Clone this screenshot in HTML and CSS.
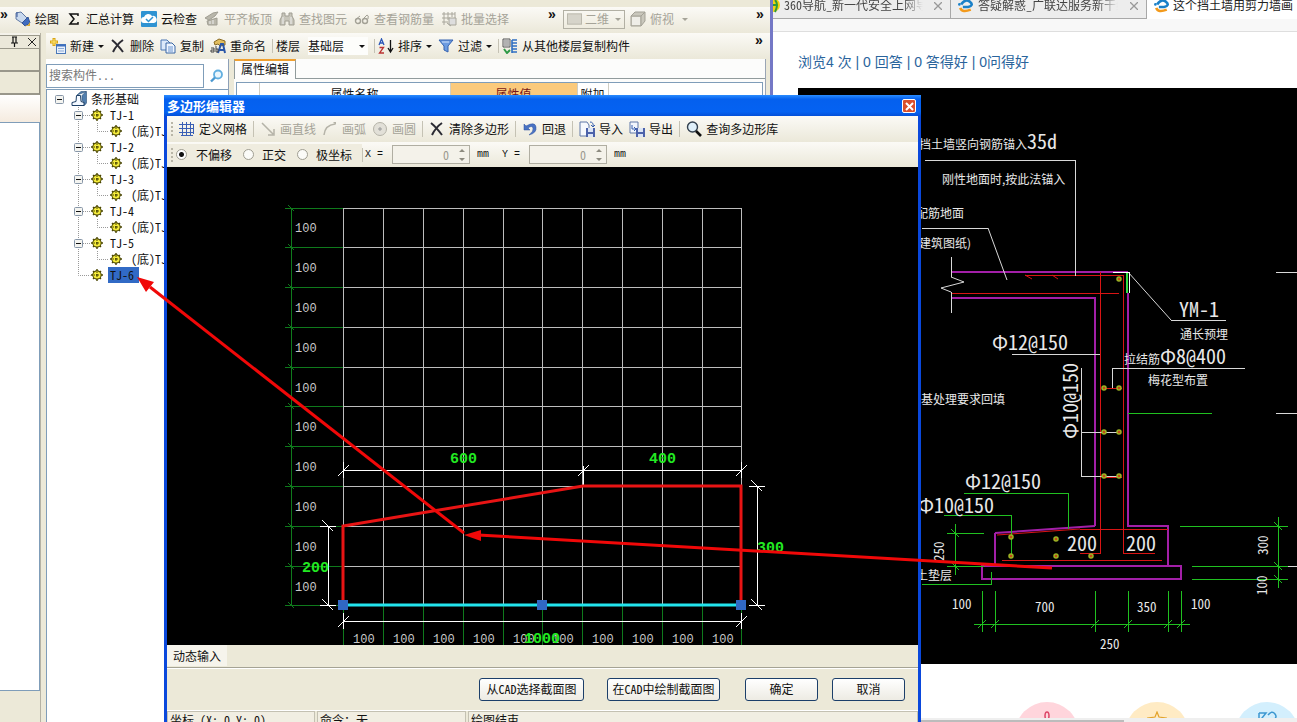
FILE: index.html
```html
<!DOCTYPE html>
<html lang="zh-CN">
<head>
<meta charset="utf-8">
<title>多边形编辑器</title>
<link rel="stylesheet" href="styles.css">
</head>
<body>
<svg class="defs" aria-hidden="true">
  <symbol id="gear" viewBox="0 0 12 12"><circle cx="6" cy="6" r="4" fill="#f2e94a" stroke="#4a4600" stroke-width="1.4"/><path d="M6 0v12M0 6h12M2 2l8 8M10 2l-8 8" stroke="#4a4600" stroke-width="1.4"/><circle cx="6" cy="6" r="3.6" fill="#f5ec3c"/><path d="M6 3v6M3 6h6" stroke="#4a4600" stroke-dasharray="1 1"/><circle cx="6" cy="6" r="1" fill="#4a4600"/></symbol>
  <symbol id="branch" viewBox="0 0 17 16"><path d="M4.500 0v16M9 8.500h8" stroke="#999" stroke-dasharray="1 1" fill="none"/><rect x=".5" y="4.500" width="8" height="8" rx="1" fill="#f4f4f0" stroke="#8796a8"/><path d="M2 8.500h5" stroke="#111"/></symbol>
  <symbol id="leaf" viewBox="0 0 36 16"><path d="M4.500 0v16M23.500 0v8.500h11" stroke="#999" stroke-dasharray="1 1" fill="none"/></symbol>
  <symbol id="last" viewBox="0 0 17 16"><path d="M4.500 0v8.500h12" stroke="#999" stroke-dasharray="1 1" fill="none"/></symbol>
  <symbol id="cross" viewBox="0 0 16 16"><path d="M2 2q5 4 11 12M13 2Q7 6 3 14" fill="none" stroke="#2b2b33" stroke-width="2"/></symbol>
  <symbol id="down" viewBox="0 0 6 16"><path d="M0 7h6L3 10z" fill="currentColor"/></symbol>
  <symbol id="brand" viewBox="0 0 18 16"><path d="M4 5Q9-2 14 2t-2 6H6" fill="none" stroke="#1a80c8" stroke-width="3"/><path d="M3 9q2 6 12 2" fill="none" stroke="#f39a1c" stroke-width="3"/><circle cx="2" cy="5" r="1.500" fill="#1a80c8"/></symbol>
</svg>

<main class="desktop">
  <section class="app">
    <div class="toolbar toolbar-top">
      <span class="more">»</span>
      <button class="tool"><svg viewBox="0 0 16 16"><path d="M1 2l5-1 6 6-5 5-6-4z" fill="#c9d9ee" stroke="#6079a5"/><path d="M2 1v5M7 12l6-6 2 6-5 3z" fill="#3f6cc0" stroke="#355596"/><path d="M10 15l3-1 2-3v4z" fill="#d9aa35"/></svg>绘图</button>
      <button class="tool"><svg viewBox="0 0 16 16"><path d="M12 5V3H4l4 5-4 5h8v-2" fill="none" stroke="#111" stroke-width="1.500"/></svg>汇总计算</button>
      <button class="tool"><svg viewBox="0 0 16 16"><rect width="16" height="16" rx="1" fill="#2f93d2"/><path d="M3 12a3 3 0 0 1 0-6 4.500 4.500 0 0 1 8-1 3.500 3.500 0 0 1 2 7z" fill="#fff"/><path d="M5 8l2.500 2.500L12 6" fill="none" stroke="#2f93d2" stroke-width="1.500"/></svg>云检查</button>
      <button class="tool off"><svg viewBox="0 0 16 16"><path d="M1 7l8-5 5-1-3 4-6 4zM3 10l10-3v7H4z" fill="#b9b7ab" stroke="#a09e93"/><path d="M6 10v3M9 9v4" stroke="#eee"/></svg>平齐板顶</button>
      <button class="tool off"><svg viewBox="0 0 16 16"><path d="M3 2h3v3h4V2h3v3l2 4v5h-5v-4H6v4H1V9l2-4z" fill="#c7c5ba" stroke="#a19f94"/><path d="M4 6v7M12 6v7" stroke="#eee"/></svg>查找图元</button>
      <button class="tool off"><svg viewBox="0 0 16 16"><path d="M1 9l5-4M8 9l5-5q2 0 1 4" fill="none" stroke="#a3a196"/><circle cx="4" cy="10" r="2.500" fill="none" stroke="#a3a196" stroke-width="1.400"/><circle cx="11" cy="10" r="2.500" fill="none" stroke="#a3a196" stroke-width="1.400"/></svg>查看钢筋量</button>
      <button class="tool off"><svg viewBox="0 0 16 16"><path d="M3 1v13M7 1v8M11 1v5M1 3h13M1 7h8M1 11h6M14 1v6" stroke="#a8a69b" fill="none"/><path d="M8 7h7v7H8zM6 12l4 3" fill="#ddd" stroke="#a8a69b"/></svg>批量选择</button>
      <span class="more push">»</span>
      <div class="view-tools">
        <div class="combo combo-off"><svg class="swatch" viewBox="0 0 16 12"><rect x=".5" y=".5" width="15" height="11" fill="#d6d4ca" stroke="#b8b6aa"/></svg><select aria-label="视图"><option>二维</option></select><svg class="arrow"><use href="#down"/></svg></div>
        <button class="tool off"><svg viewBox="0 0 16 16"><path d="M1 5l4-4h10v9l-4 5H1z" fill="#c9c7bc" stroke="#a3a196"/><path d="M1 5h10v10M11 5l4-4" fill="none" stroke="#a3a196"/><path d="M2 6h8v8H2z" fill="#efeee8"/></svg>俯视<svg class="arrow wide"><use href="#down"/></svg></button>
      </div>
      <span class="more end">»</span>
    </div>

    <div class="workspace">
      <aside class="dock">
        <div class="dock-head"><svg viewBox="0 0 30 12"><path d="M3 1h5M4 1v6M7 1v6M2 7h7M5.500 7v4" stroke="#111" fill="none" stroke-width="1.200"/><path d="M19 2l8 8M27 2l-8 8" stroke="#222" fill="none"/></svg></div>
        <div class="dock-bar"></div>
        <div class="dock-bar"></div>
        <div class="dock-gap"></div>
        <div class="dock-body"></div>
        <div class="dock-foot"></div>
      </aside>

      <div class="content">
        <div class="toolbar toolbar-sub">
          <button class="tool"><svg viewBox="0 0 16 16"><path d="M4 0v8M0 4h8" stroke="#d9a514" stroke-width="3"/><path d="M4 1v6M1 4h6" stroke="#ffe97a"/><rect x="6.500" y="6.500" width="9" height="9" fill="#eaf1fb" stroke="#4a78b8"/><path d="M6 7.500h10" stroke="#3e6fbe" stroke-width="2"/><path d="M8 10.500h6M8 13h6" stroke="#89a9d6"/></svg>新建<svg class="arrow"><use href="#down"/></svg></button>
          <button class="tool"><svg><use href="#cross"/></svg>删除</button>
          <button class="tool"><svg viewBox="0 0 16 16"><path d="M1 2h6l3 3v7H1z" fill="#dce9fa" stroke="#4b77b4"/><path d="M6 5h6l3 3v7H6z" fill="#eef5ff" stroke="#3b67a4"/><path d="M8 9h5M8 11h5M8 13h5" stroke="#6a94cf"/></svg>复制</button>
          <button class="tool"><svg viewBox="0 0 16 16"><path d="M4 4l5-3 6 2v4l-5 1-2-2-3 1z" fill="#e2bd5d" stroke="#8a6b25"/><path d="M8 15l3-9h2l2 9M9 12h5" fill="none" stroke="#2a56a8" stroke-width="2"/><path d="M1 10h3v4H1v-2h3M6 8v6h2v-3H6" fill="none" stroke="#444"/></svg>重命名</button>
          <span class="sep"></span>
          <label class="floor-label" for="floor">楼层</label>
          <div class="combo floor"><select id="floor"><option>基础层</option></select><svg class="arrow"><use href="#down"/></svg></div>
          <span class="sep"></span>
          <button class="tool"><svg viewBox="0 0 16 16"><path d="M1 7l2.500-6L6 7M2 5h3" fill="none" stroke="#2a56b8" stroke-width="1.300"/><path d="M1.500 9.500h4L1.500 15H6" fill="none" stroke="#b33" stroke-width="1.300"/><path d="M12.500 2v11M10 10l2.500 4 2.500-4" fill="none" stroke="#111" stroke-width="1.300"/></svg>排序<svg class="arrow"><use href="#down"/></svg></button>
          <button class="tool"><svg viewBox="0 0 16 16"><path d="M1 2h14L10 8v6l-4-2V8z" fill="#6c9be0" stroke="#3563b0"/><path d="M4 4h7" stroke="#cfe1fb"/></svg>过滤<svg class="arrow"><use href="#down"/></svg></button>
          <span class="sep"></span>
          <button class="tool"><svg viewBox="0 0 16 16"><path d="M1 1h7v8H1z" fill="#eee" stroke="#555"/><path d="M2 3h5M2 5h5M2 7h5" stroke="#777"/><path d="M10 2v13M15 2h-5M15 5h-5M15 8h-5M15 11h-5M15 14h-5" stroke="#2f6fc2" stroke-width="1.600"/><path d="M2 11l3 4 3-3" fill="none" stroke="#2f9a46" stroke-width="2"/></svg>从其他楼层复制构件</button>
          <span class="more end">»</span>
        </div>

        <div class="panels">
          <section class="components">
            <div class="search"><input type="search" placeholder="搜索构件..." aria-label="搜索构件"><svg viewBox="0 0 14 14"><circle cx="8" cy="5.500" r="4" fill="#eaf6fd" stroke="#62afe0" stroke-width="1.800"/><path d="M5 8.500l-4 4" stroke="#4a98d0" stroke-width="2.400"/></svg></div>
            <ul class="tree">
              <li class="root"><svg class="box" viewBox="0 0 9 16"><rect x=".5" y="4.500" width="8" height="8" rx="1" fill="#f4f4f0" stroke="#8796a8"/><path d="M2 8.500h5" stroke="#111"/></svg><svg class="footing" viewBox="0 0 16 16"><path d="M6 4l4-3.500h5l-4 4v5l2 2 .5 3 2-2.500V.5z" fill="#527fae" stroke="#2b5078" stroke-width=".6"/><path d="M1 14.500h12v-3l-3-1-.5-6h-4L5 10.500l-4 1z" fill="#f4f9ff" stroke="#1d3f66"/></svg><span>条形基础</span></li>
              <li><svg class="branch"><use href="#branch"/></svg><svg class="gear"><use href="#gear"/></svg><span>TJ-1</span></li>
              <li class="child"><svg class="leaf"><use href="#leaf"/></svg><svg class="gear"><use href="#gear"/></svg><span>(底)TJ-1</span></li>
              <li><svg class="branch"><use href="#branch"/></svg><svg class="gear"><use href="#gear"/></svg><span>TJ-2</span></li>
              <li class="child"><svg class="leaf"><use href="#leaf"/></svg><svg class="gear"><use href="#gear"/></svg><span>(底)TJ-2</span></li>
              <li><svg class="branch"><use href="#branch"/></svg><svg class="gear"><use href="#gear"/></svg><span>TJ-3</span></li>
              <li class="child"><svg class="leaf"><use href="#leaf"/></svg><svg class="gear"><use href="#gear"/></svg><span>(底)TJ-3</span></li>
              <li><svg class="branch"><use href="#branch"/></svg><svg class="gear"><use href="#gear"/></svg><span>TJ-4</span></li>
              <li class="child"><svg class="leaf"><use href="#leaf"/></svg><svg class="gear"><use href="#gear"/></svg><span>(底)TJ-4</span></li>
              <li><svg class="branch"><use href="#branch"/></svg><svg class="gear"><use href="#gear"/></svg><span>TJ-5</span></li>
              <li class="child"><svg class="leaf"><use href="#leaf"/></svg><svg class="gear"><use href="#gear"/></svg><span>(底)TJ-5</span></li>
              <li><svg class="branch"><use href="#last"/></svg><svg class="gear"><use href="#gear"/></svg><span class="selected">TJ-6</span></li>
            </ul>
          </section>
          <section class="props">
            <div class="tabs"><button class="tab">属性编辑</button></div>
            <div class="sheet">
              <table><thead><tr><th class="c-num"></th><th class="c-name">属性名称</th><th class="c-value">属性值</th><th class="c-extra">附加</th><th></th></tr></thead></table>
            </div>
          </section>
        </div>
      </div>
    </div>
  </section>

  <section class="browser">
    <nav class="browser-tabs">
      <div class="btab first"><svg class="fav-half" viewBox="0 0 8 16"><circle cx="0" cy="5" r="7" fill="#f5d313"/><path d="M0 5h4M2 0q4 4 0 12" stroke="#2f9a3a" stroke-width="2" fill="none"/></svg><span class="btitle">360导航_新一代安全上网导航</span><button class="bclose" aria-label="关闭"><svg viewBox="0 0 8 8"><path d="M0 0l8 8M8 0L0 8" stroke="#999" stroke-width="1.300"/></svg></button></div>
      <div class="btab second"><svg class="fav"><use href="#brand"/></svg><span class="btitle">答疑解惑_广联达服务新干线</span><button class="bclose" aria-label="关闭"><svg viewBox="0 0 8 8"><path d="M0 0l8 8M8 0L0 8" stroke="#999" stroke-width="1.300"/></svg></button></div>
      <div class="btab active"><svg class="fav"><use href="#brand"/></svg><span class="btitle">这个挡土墙用剪力墙画</span></div>
    </nav>
    <div class="browser-bar"></div>
    <article class="page">
      <p class="stats">浏览4 次 | 0 回答 | 0 答得好 | 0问得好</p>
      <div class="photo">
        <svg class="cad" viewBox="798 88 499 576" role="img" aria-label="挡土墙剖面">
          <g fill="none" shape-rendering="crispEdges">
            <g stroke="#a31fa8" stroke-width="2"><path d="M951 272h177M1128 293v233h40v40M951 298h144v228M995 566v-33"/><path d="M995 533l100-7" shape-rendering="auto"/><path d="M982 566h199v13H982z"/></g>
            <g stroke="#d81414"><path d="M1025 275h98v278h32M951 293h168M1100 272v281h-20M1080 529h88M1002 560h160M1102 388h20M1102 477h20"/><path d="M1025 275l7 4M1052 275l6 4M997 535l83-6" shape-rendering="auto"/></g>
            <g stroke="#20c020"><path d="M1128 413h84M964 493h104v36M944 515h67v41M955 524v51M947 533h37M947 566h37M922 584h69v-12M1180 526h108M1192 566h96M1192 579h96M1278 517v71M974 624h216M982 591v41M995 591v41M1095 591v41M1128 591v41M1168 591v41M1181 591v41"/><path d="M951 529l8 8M951 562l8 8M1274 522l8 8M1274 562l8 8M1274 575l8 8M978 628l8-8M991 628l8-8M1091 628l8-8M1124 628l8-8M1164 628l8-8M1177 628l8-8" shape-rendering="auto"/><path d="M1127 273v20" stroke="#35e045" stroke-width="2"/></g>
            <g stroke="#d8d8d8"><path d="M925 160h150v116M922 228h66M1012 354h88M1112 388v-20h133M1081 368v108h40M1081 432h39M1171 320h55M1276 272h21M1276 413h21M1288 566h9M951 257v20M951 292v21"/><path d="M988 228l19 52M951 277l13 5-23 6 10 4M1128 272l43 48" shape-rendering="auto"/><path d="M1113 272h16v21" stroke="#fff"/></g>
          </g>
          <g fill="#c44a16" stroke="#9cb424" stroke-width="1.500"><circle cx="1119" cy="279" r="2"/><circle cx="1104" cy="388" r="2"/><circle cx="1119" cy="388" r="2"/><circle cx="1104" cy="432" r="2"/><circle cx="1119" cy="432" r="2"/><circle cx="1104" cy="476" r="2"/><circle cx="1119" cy="476" r="2"/><circle cx="1011" cy="537" r="2"/><circle cx="1056" cy="539" r="2"/><circle cx="1011" cy="556" r="2"/><circle cx="1056" cy="556" r="2"/><circle cx="1091" cy="556" r="2"/></g>
          <g class="cad-text">
            <text x="919" y="149">挡土墙竖向钢筋锚入<tspan class="num">35d</tspan></text>
            <text x="942" y="184">刚性地面时,按此法锚入</text>
            <text x="916" y="218">配筋地面</text>
            <text x="971" y="248" text-anchor="end">(建筑图纸)</text>
            <text x="1180" y="339">通长预埋</text>
            <text x="1124" y="364">拉结筋<tspan class="num">Φ8@400</tspan></text>
            <text x="1148" y="385">梅花型布置</text>
            <text x="921" y="404">基处理要求回填</text>
            <text x="916" y="580">土垫层</text>
            <g class="num">
              <text x="1179" y="317">YM-1</text><text x="992" y="350">Φ12@150</text><text x="965" y="489">Φ12@150</text><text x="918" y="513">Φ10@150</text>
              <text transform="translate(1078 439) rotate(-90)">Φ10@150</text>
              <text x="1067" y="551">200</text><text x="1126" y="551">200</text>
            </g>
            <g class="small">
              <text x="952" y="609">100</text><text x="1035" y="612">700</text><text x="1137" y="612">350</text><text x="1191" y="609">100</text><text x="1100" y="649">250</text>
              <text transform="translate(944 561) rotate(-90)">250</text><text transform="translate(1268 555) rotate(-90)">300</text><text transform="translate(1267 595) rotate(-90)">100</text>
            </g>
          </g>
        </svg>
      </div>
      <div class="actions">
        <button class="round pink" aria-label="点赞"><svg viewBox="0 0 20 20"><path d="M7 20q2-8 1-15 0-4 2-4t2 4q-1 7 1 15" fill="none" stroke="#dc4566" stroke-width="1.500"/></svg></button>
        <button class="round gold" aria-label="收藏"><svg viewBox="0 0 20 20"><path d="M10 1l2 5 7 1-5 5 2 7-6-3-6 3 2-7-5-5 7-1z" fill="none" stroke="#e2a32c" stroke-width="1.200"/></svg></button>
        <button class="round sky" aria-label="分享"><svg viewBox="0 0 20 20"><path d="M2 2h7l-4 5 4 4M11 4q4-5 7-1t-3 6l-4 3M2 2v8" fill="none" stroke="#3c97d0" stroke-width="1.500"/></svg></button>
      </div>
    </article>
    <div class="scroll"><div class="thumb"></div></div>
  </section>

  <section class="dialog" role="dialog" aria-labelledby="dlg-title">
    <header class="titlebar"><h1 id="dlg-title">多边形编辑器</h1><button class="close" aria-label="关闭窗口"><svg viewBox="0 0 9 9"><path d="M1 1l7 7M8 1L1 8" stroke="#fff" stroke-width="2"/></svg></button></header>
    <div class="dialog-body">
      <div class="toolbar dlg-tools">
        <span class="grip"></span>
        <button class="tool"><svg viewBox="0 0 16 16"><path d="M3.500 1v14M7.500 1v14M11.500 1v14M14.500 3v10M0 3.500h15M0 7.500h15M0 11.500h15M2 14.500h12" stroke="#3a5fb5"/></svg>定义网格</button>
        <span class="sep"></span>
        <button class="tool off"><svg viewBox="0 0 16 16"><path d="M2 2l11 11M14 8v6H8" stroke="#b5b3a8" stroke-width="1.500" fill="none"/></svg>画直线</button>
        <button class="tool off"><svg viewBox="0 0 16 16"><path d="M2 14Q3 4 13 3" stroke="#b5b3a8" stroke-width="1.500" fill="none"/><path d="M11 1h3v3z" fill="#b5b3a8"/></svg>画弧</button>
        <button class="tool off"><svg viewBox="0 0 16 16"><circle cx="8" cy="8" r="6.500" fill="#e2e0d8" stroke="#b5b3a8"/><path d="M8 6v4M6 8h4" stroke="#999"/></svg>画圆</button>
        <span class="sep"></span>
        <button class="tool"><svg><use href="#cross"/></svg>清除多边形</button>
        <span class="sep"></span>
        <button class="tool"><svg viewBox="0 0 16 16"><path d="M2 3v6h6L6 7q4-3 5 0t-4 7q8-2 7-8T4 5z" fill="#4a73c4" stroke="#2d519c" stroke-width=".5"/></svg>回退</button>
        <span class="sep"></span>
        <button class="tool"><svg viewBox="0 0 16 16"><path d="M1 1h7l2 3v11H1z" fill="#f7f9fd" stroke="#6179a8"/><path d="M11 1q4 0 3 5M12 4l2 2 2-2" fill="none" stroke="#365fae"/><path d="M7 7h9v9H7z" fill="#4c62aa"/><path d="M9 7h5v4H9zM9 13h5v3H9z" fill="#dce5f6"/></svg>导入</button>
        <button class="tool"><svg viewBox="0 0 16 16"><path d="M1 1h8v11H1z" fill="#f2f6fd" stroke="#6179a8"/><path d="M3 4v4h4M5 6l2 2-2 2" fill="none" stroke="#365fae"/><path d="M7 7h9v9H7z" fill="#4c62aa"/><path d="M9 7h5v4H9zM9 13h5v3H9z" fill="#dce5f6"/></svg>导出</button>
        <span class="sep"></span>
        <button class="tool"><svg viewBox="0 0 16 16"><circle cx="6.500" cy="6" r="5" fill="#e0f0fa" stroke="#33404f" stroke-width="1.400"/><path d="M10 10l5 5" stroke="#111" stroke-width="2.600"/></svg>查询多边形库</button>
      </div>
      <div class="toolbar dlg-modes">
        <div class="modes">
          <span class="grip"></span>
          <label><input type="radio" name="mode" checked>不偏移</label>
          <label><input type="radio" name="mode">正交</label>
          <label><input type="radio" name="mode">极坐标</label>
        </div>
        <span class="sep"></span>
        <label class="axis" for="off-x">X =</label>
        <div class="spin"><input id="off-x" type="text" value="0"><svg viewBox="0 0 6 14"><path d="M0 4h6L3 1zM0 10h6l-3 3z" fill="#8d8b80"/></svg></div>
        <span class="unit">mm</span>
        <label class="axis" for="off-y">Y =</label>
        <div class="spin"><input id="off-y" type="text" value="0"><svg viewBox="0 0 6 14"><path d="M0 4h6L3 1zM0 10h6l-3 3z" fill="#8d8b80"/></svg></div>
        <span class="unit">mm</span>
      </div>
      <div class="canvas">
        <svg viewBox="167 167 751 478" preserveAspectRatio="xMinYMin meet" role="img" aria-label="截面">
          <g fill="none" shape-rendering="crispEdges">
            <path stroke="#0f7a1c" d="M291 208v397M285 208h58M285 247h58M285 287h58M285 327h58M285 367h58M285 406h58M285 446h58M285 486h58M285 526h58M285 566h58M285 605h58M343 605v40M383 605v40M423 605v40M463 605v40M503 605v40M542 605v40M582 605v40M622 605v40M662 605v40M702 605v40M741 605v40"/>
            <path stroke="#0f7a1c" d="M288 205l6 6M288 244l6 6M288 284l6 6M288 324l6 6M288 364l6 6M288 403l6 6M288 443l6 6M288 483l6 6M288 523l6 6M288 563l6 6M288 602l6 6"/>
            <path stroke="#bdbdbd" d="M343 208v397M383 208v397M423 208v397M463 208v397M503 208v397M542 208v397M582 208v397M622 208v397M662 208v397M702 208v397M741 208v397M343 208h398M343 247h398M343 287h398M343 327h398M343 367h398M343 406h398M343 446h398M343 486h398M343 526h398M343 566h398"/>
            <path stroke="#fff" d="M343 470h398M343 462v16M583 466v20M741 462v16M338 476l11-11M578 476l11-11M736 476l11-11M343 621h398M343 613v16M741 613v16M338 627l11-11M736 627l11-11M328 526v79M320 526h16M320 605h16M322 520l11 11M322 599l11 11M757 486v119M749 486h16M749 605h16M751 480l11 11M751 599l11 11"/>
          </g>
          <path d="M343 605v-79l240-40h158v119" fill="none" stroke="#e81414" stroke-width="3"/>
          <path d="M343 605h398" stroke="#22e4ee" stroke-width="3"/>
          <path d="M338 600h10v10h-10zM537 600h10v10h-10zM736 600h10v10h-10z" fill="#3068c4"/>
          <g class="grid-num">
            <text x="295" y="232">100</text><text x="295" y="272">100</text><text x="295" y="312">100</text><text x="295" y="352">100</text><text x="295" y="392">100</text><text x="295" y="431">100</text><text x="295" y="471">100</text><text x="295" y="511">100</text><text x="295" y="551">100</text><text x="295" y="591">100</text>
            <text x="353" y="643">100</text><text x="393" y="643">100</text><text x="433" y="643">100</text><text x="473" y="643">100</text><text x="513" y="643">100</text><text x="552" y="643">100</text><text x="592" y="643">100</text><text x="632" y="643">100</text><text x="672" y="643">100</text><text x="712" y="643">100</text>
          </g>
          <g class="dim"><text x="450" y="463">600</text><text x="649" y="463">400</text><text x="302" y="572">200</text><text x="757" y="552">300</text><text x="524" y="643">1000</text></g>
        </svg>
      </div>
      <div class="dynamic"><button>动态输入</button></div>
      <div class="buttons">
        <button class="w-cad">从CAD选择截面图</button><button class="w-draw">在CAD中绘制截面图</button><button class="w-std">确定</button><button class="w-std cancel">取消</button>
      </div>
      <footer class="status"><span class="s1">坐标 (X: 0 Y: 0)</span><span class="s2">命令：无</span><span class="s3">绘图结束</span></footer>
    </div>
  </section>

  <svg class="arrows" aria-hidden="true"><g stroke="#f00808" stroke-width="3" fill="none"><path d="M1052 568L478 535"/><path d="M464 533L150 287"/></g><path d="M464 535l17-5v11zM137 277l17 5-8 10z" fill="#f00808"/></svg>
</main>
</body>
</html>
```

FILE: styles.css
```css
* { box-sizing: border-box; }
body { margin: 0; font: 12px/16px "Noto Sans Mono CJK SC", "Noto Sans CJK SC", sans-serif; color: #111; }
button, input, select { font: inherit; color: inherit; margin: 0; padding: 0; border: 0; background: none; border-radius: 0; }
svg { display: block; flex: none; }
.defs { position: absolute; width: 0; height: 0; }
.desktop { position: relative; display: grid; grid-template-columns: 773px 1fr; height: 100vh; overflow: hidden; background: #fff; }

.app { display: flex; flex-direction: column; min-height: 0; background: #ece9d8; border-right: 3px solid #7478c6; padding-top: 7px; }
.toolbar { display: flex; align-items: center; background: linear-gradient(#fbfaf6, #ebe8d9); white-space: nowrap; }
.toolbar-top { height: 26px; gap: 7px; padding: 0 6px 2px 0; }
.tool { display: flex; align-items: center; gap: 4px; line-height: 16px; white-space: nowrap; }
.tool svg { width: 16px; height: 16px; }
.tool .arrow, .arrow { width: 6px; height: 16px; }
.tool .wide { margin-left: 4px; }
.off { color: #a5a398; }
.more { width: 8px; font: bold 14px/14px "Liberation Sans", sans-serif; align-self: flex-start; }
.push { margin-left: 32px; }
.end { margin-left: auto; }
.view-tools { display: flex; align-items: center; gap: 5px; }
.sep { width: 1px; height: 14px; background: #c5c2b4; }
.combo { display: flex; align-items: center; }
.combo select { appearance: none; flex: 1; min-width: 0; outline: 0; }
.combo-off { width: 62px; height: 19px; border: 1px solid #b2b0a4; padding: 0 3px; gap: 3px; color: #a5a398; }
.swatch { width: 15px; height: 12px; }

.workspace { display: flex; flex: 1; min-height: 0; }
.dock { display: flex; flex-direction: column; width: 41px; margin-right: 5px; border-right: 1px solid #b5b2a4; background: #f4f2ea; padding-top: 2px; }
.dock-head { display: flex; justify-content: flex-end; align-items: center; height: 14px; border: 1px solid #9b998c; border-left: 0; background: #ebe8da; }
.dock-head svg { width: 30px; height: 12px; }
.dock-bar { height: 23px; border-right: 1px solid #8d8b80; border-bottom: 2px solid #99978b; background: #ece9d8; }
.dock-gap { height: 27px; background: linear-gradient(#fff, #f5ebdf); }
.dock-body { flex: 1; border: 1px solid #7f9db9; border-left: 0; background: #fff; }
.dock-foot { height: 31px; background: #ece9d8; }
.content { display: flex; flex-direction: column; flex: 1; min-width: 0; }
.toolbar-sub { height: 26px; gap: 6px; padding: 0 7px 1px 4px; }
.toolbar-sub .sep { margin-right: -3px; }
.floor { width: 60px; height: 18px; background: #fdfdfb; padding-right: 3px; margin-left: 2px; }
.panels { display: flex; flex: 1; gap: 5px; min-height: 0; padding-right: 4px; }
.components { display: flex; flex-direction: column; width: 183px; border-right: 1px solid #8ea0b8; background: #fff; padding-top: 5px; }
.search { display: flex; align-items: center; gap: 6px; padding-bottom: 1px; }
.search input { width: 158px; height: 24px; border: 1px solid #7f9db9; padding: 0 2px 4px; outline: 0; }
.search input::placeholder { color: #777; opacity: 1; }
.search svg { width: 14px; height: 14px; }
.tree { flex: 1; margin: 0; padding: 1px 0 0 27px; list-style: none; border: 1px solid #7f9db9; border-width: 1px 0 0 1px; }
.tree li { display: flex; align-items: center; height: 16px; white-space: nowrap; }
.tree .root { margin-left: -19px; }
.box { width: 9px; height: 16px; }
.footing { width: 16px; height: 16px; margin: 0 4px 0 7px; }
.branch { width: 17px; height: 16px; }
.leaf { width: 36px; height: 16px; }
.gear { width: 12px; height: 12px; margin-right: 5px; }
.tree span { padding: 0 2px; }
.tree .root span { padding: 0; }
.child span { margin-left: 2px; }
.tree .selected { background: #316ac5; padding-right: 5px; }
.props { display: flex; flex-direction: column; flex: 1; min-width: 0; background: #fcfcfb; border-right: 1px solid #9aa5b5; }
.tabs { display: flex; height: 20px; border-bottom: 1px solid #919b9c; }
.tab { height: 20px; padding: 0 6px 2px; border: 1px solid #919b9c; border-top: 2px solid #f0a030; border-bottom: 0; background: #fdfdfd; line-height: 16px; }
.sheet { flex: 1; margin: 3px 2px 0; border: 1px solid #7f9db9; background: #fff; }
.sheet table { width: 100%; border-collapse: collapse; table-layout: fixed; }
.sheet th { height: 22px; padding: 0; font-weight: normal; border-right: 1px solid #d0cec4; white-space: nowrap; }
.sheet th:last-child { border: 0; }
.c-num { width: 22px; }
.c-name { width: 191px; }
.sheet .c-value { width: 127px; background: #fbca7c; color: #7a1616; }
.c-extra { width: 31px; }

.browser { display: flex; flex-direction: column; min-width: 0; min-height: 0; background: #fff; }
.browser-tabs { display: flex; height: 19px; overflow: hidden; background: #ededed; color: #444; }
.btab { display: flex; align-items: flex-start; border: solid #a8a8a8; border-width: 0 1px 1px 0; padding-right: 8px; }
.first { width: 178px; gap: 3px; }
.second { width: 196px; gap: 4px; padding-left: 6px; }
.active { flex: 1; gap: 3px; padding-left: 6px; border: 0; background: #fff; color: #222; }
.btitle { flex: 1; overflow: hidden; white-space: nowrap; margin-top: -3px; margin-right: 8px; }
.first .btitle, .second .btitle { mask-image: linear-gradient(to right, #000 85%, transparent); }
.active .btitle { margin-right: 0; }
.fav { width: 17px; height: 14px; }
.fav-half { width: 8px; height: 16px; }
.bclose { padding-top: 2px; }
.bclose svg { width: 8px; height: 8px; }
.browser-bar { height: 13px; flex: none; background: #f8f8f8; border-bottom: 1px solid #dedede; }
.page { flex: 1; min-height: 0; overflow: hidden; padding-left: 25px; }
.stats { margin: 0; padding: 20px 0 16px; font: 14px/20px "Liberation Sans", "Noto Sans CJK SC", sans-serif; color: #2a649c; }
.photo { background: #000; }
.cad { width: 100%; height: auto; }
.cad-text { fill: #e8e8e8; font: 12px "Noto Sans CJK SC", sans-serif; }
.num { font: 300 20px "Noto Sans Mono CJK SC", "Liberation Mono", monospace; }
.small { font: 300 13px "Noto Sans Mono CJK SC", "Liberation Mono", monospace; }
.actions { display: flex; justify-content: flex-end; gap: 46px; padding-top: 38px; margin-right: -2px; }
.round { flex: none; width: 64px; height: 64px; border-radius: 50%; padding-top: 9px; display: flex; justify-content: center; }
.round svg { width: 20px; height: 20px; }
.pink { background: #ffd5dc; }
.gold { background: #ffebc4; }
.sky { background: #d3effd; }
.scroll { height: 4px; flex: none; background: #efefef; padding-top: 2px; }
.thumb { width: 67%; height: 2px; background: #bcbcbc; }

.dialog { position: absolute; left: 164px; top: 95px; bottom: 0; width: 757px; display: flex; flex-direction: column; background: #0a48dc; padding: 0 3px; overflow: hidden; }
.titlebar { display: flex; align-items: center; justify-content: space-between; height: 21px; flex: none; margin: 0 -3px; padding: 1px 5px 0 3px; background: linear-gradient(#2a8cff, #0560ee 20%, #0562f2 80%, #0450d8); }
.titlebar h1 { margin: 0; font: bold 13px/18px "Noto Sans CJK SC", sans-serif; color: #fff; }
.close { display: flex; align-items: center; justify-content: center; width: 14px; height: 14px; border: 1px solid #fff; border-radius: 2px; background: #d9502c; }
.close svg { width: 9px; height: 9px; }
.dialog-body { display: flex; flex-direction: column; flex: none; background: #ece9d8; }
.dlg-tools { height: 26px; gap: 6px; padding-left: 4px; }
.grip { width: 2px; height: 14px; background: repeating-linear-gradient(#b9b6a8 0 2px, transparent 2px 4px); }
.dlg-tools .sep { height: 16px; }
.dlg-modes { height: 25px; }
.modes { display: flex; align-items: center; gap: 11px; height: 22px; padding-left: 4px; width: 195px; background: #efecdf; }
.modes .grip { margin-right: -8px; }
.modes label { display: flex; align-items: center; gap: 9px; }
.modes label + label { gap: 8px; }
.modes input { appearance: none; width: 11px; height: 11px; border: 1px solid #a09e92; border-radius: 50%; background: #fbfbf8; }
.modes input:checked { background: radial-gradient(#111 0 2px, #fff 3px); }
.axis, .unit { font: 10px/16px "Liberation Mono", monospace; }
.axis { width: 29px; padding-left: 2px; }
.spin { display: flex; align-items: center; width: 78px; height: 19px; border: 1px solid #b0aea2; background: #f4f2ea; padding-right: 4px; gap: 10px; color: #9c9a8f; }
.spin input { flex: 1; min-width: 0; text-align: right; outline: 0; }
.spin svg { width: 6px; height: 14px; }
.unit { width: 30px; padding-left: 7px; }
.canvas { background: #000; }
.canvas svg { width: 100%; height: auto; }
.grid-num { fill: #c8c8c8; font: 12px "Liberation Mono", monospace; }
.dim { fill: #22e822; font: bold 15px "Liberation Mono", monospace; }
.dynamic { height: 23px; border-bottom: 1px solid #a5a394; }
.dynamic button { height: 21px; padding: 0 6px; background: #f6f4ec; }
.buttons { display: flex; justify-content: flex-end; padding: 9px 13px; border-top: 1px solid #fff; }
.buttons button { height: 23px; border: 1px solid #1c3f6a; border-radius: 3px; background: linear-gradient(#fff, #edebe3); white-space: nowrap; padding-bottom: 2px; }
.w-cad { width: 105px; margin-right: 23px; }
.w-draw { width: 113px; margin-right: 25px; }
.w-std { width: 73px; }
.cancel { margin-left: 14px; }
.status { display: flex; gap: 2px; border-top: 1px solid #fff; }
.status span { height: 20px; border: 1px solid #c4c1b2; padding: 0 2px; line-height: 15px; background: #f1eee2; }
.s1 { width: 148px; }
.s2 { width: 149px; }
.s3 { flex: 1; }
.arrows { position: absolute; left: 0; top: 0; width: 100%; height: 100%; pointer-events: none; }
```
